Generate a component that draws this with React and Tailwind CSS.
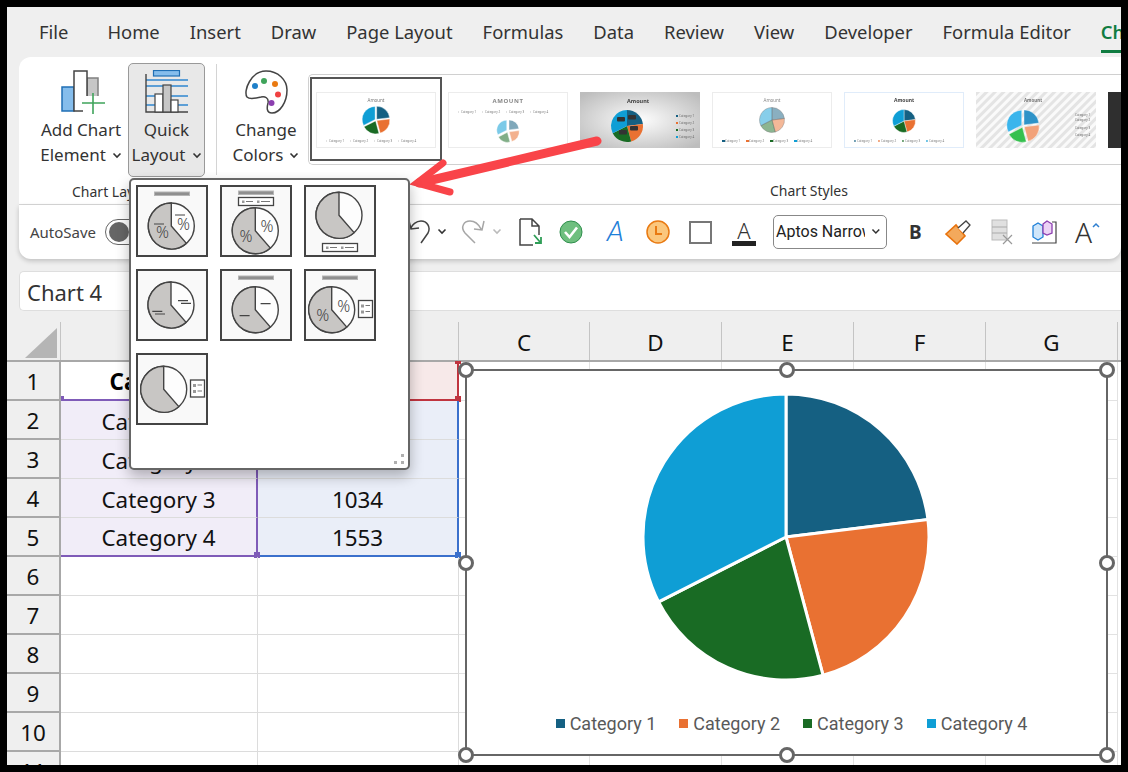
import React from 'react';

const UI = "font-['Noto_Sans',sans-serif]";
const tabs = ['Home', 'Insert', 'Draw', 'Page Layout', 'Formulas', 'Data', 'Review', 'View', 'Developer', 'Formula Editor'];
const PIE = ['#156082', '#e97132', '#196b24', '#0f9ed5'];
const ENDS = [0, 83, 165, 243, 360];

function pt(cx, cy, r, deg) {
    const a = (deg - 90) * Math.PI / 180;
    return [cx + r * Math.cos(a), cy + r * Math.sin(a)];
}

function slicePath(cx, cy, r, from, to) {
    const [x1, y1] = pt(cx, cy, r, from);
    const [x2, y2] = pt(cx, cy, r, to);
    return `M${cx} ${cy}L${x1} ${y1}A${r} ${r} 0 ${to - from > 180 ? 1 : 0} 1 ${x2} ${y2}Z`;
}

function Chevron({ color = '#333' }) {
    return (
        <svg width="10" height="7" viewBox="0 0 10 7" className="inline-block ml-[6px] mb-[2px]">
            <path d="M1.5 1.5L5 5L8.5 1.5" fill="none" stroke={color} strokeWidth="1.6" />
        </svg>
    );
}

function AddChartIcon() {
    return (
        <svg width="44" height="44" viewBox="0 0 44 44" className="ml-[4px]">
            <rect x="1" y="17" width="12" height="24" fill="#85bdec" stroke="#1f6fb5" strokeWidth="1.5" />
            <rect x="26" y="8" width="11" height="33" fill="#c6c6c6" stroke="#808080" strokeWidth="1.5" />
            <rect x="13" y="1" width="13" height="40" fill="#fff" stroke="#444" strokeWidth="1.5" />
            <rect x="22" y="26" width="22" height="18" fill="#fff" />
            <path d="M32 23V45M21 33H44" stroke="#3fa45b" strokeWidth="1.6" />
        </svg>
    );
}

function QuickLayoutIcon() {
    return (
        <svg width="44" height="44" viewBox="0 0 44 44">
            <rect x="8.5" y="0.5" width="26" height="5.5" fill="#85bdec" stroke="#1f6fb5" strokeWidth="1.2" />
            <path d="M1 10H43M1 16H43M1 26H43M1 35H43" stroke="#2f86cf" strokeWidth="1.3" />
            <path d="M1 4V42H43" fill="none" stroke="#444" strokeWidth="1.4" />
            <rect x="10" y="24" width="8" height="18" fill="#fff" stroke="#444" strokeWidth="1.2" />
            <rect x="18" y="15" width="8" height="27" fill="#c6c6c6" stroke="#444" strokeWidth="1.2" />
            <rect x="26" y="30" width="7" height="12" fill="#fff" stroke="#444" strokeWidth="1.2" />
        </svg>
    );
}

function PaletteIcon() {
    return (
        <svg width="44" height="44" viewBox="0 0 44 44">
            <path d="M22 1C34 1 43 10 43 20C43 32 36 43 28 43C22 43 23 37 24 33C25 28 21 26 17 27C12 28 6 30 3 27C-1 21 7 1 22 1Z" fill="#fff" stroke="#444" strokeWidth="1.5" />
            <circle cx="11" cy="16" r="3" fill="#1f80c9" />
            <circle cx="20" cy="11" r="3" fill="#3fa45b" />
            <circle cx="31" cy="14" r="3" fill="#e97a12" />
            <circle cx="34" cy="24.500" r="3" fill="#f04242" />
            <circle cx="27.500" cy="33" r="3" fill="#8c3fb0" />
        </svg>
    );
}

function BigButton({ icon, top, bottom, className, iconClass = 'mt-[13px]' }) {
    return (
        <div className={`flex flex-col items-center ${className}`}>
            <div className={`h-[44px] ${iconClass}`}>{icon}</div>
            <div className="mt-[3px] text-[17px] leading-[25px] text-[#333] text-center whitespace-nowrap">
                <div>{top}</div>
                <div>{bottom}<Chevron /></div>
            </div>
        </div>
    );
}

function ThumbPie({ cx, cy, r, gap = 1, colors = PIE, opacity = 1, stroke = '#fff' }) {
    return ENDS.slice(0, 4).map((from, i) => {
        const mid = (from + ENDS[i + 1]) / 2;
        const [ox, oy] = pt(0, 0, gap, mid);
        return (
            <path key={i} d={slicePath(cx + ox, cy + oy, r, from, ENDS[i + 1])} fill={colors[i]} fillOpacity={opacity} stroke={stroke} strokeWidth="0.4" />
        );
    });
}

function LegendRow({ y, size = 3, fill = '#777', swatch = 1.2, colors }) {
    return [13, 37, 61, 85].map((x, i) => (
        <g key={x}>
            <rect x={x - 3} y={y - swatch / 2} width={swatch * 1.6} height={swatch} fill={colors ? colors[i] : '#999'} />
            <text x={x} y={y + 1} fontSize={size} fill={fill}>Category {i + 1}</text>
        </g>
    ));
}

function LegendCol({ x, ys, colors, fill = '#666' }) {
    return ys.map((y, i) => (
        <g key={y}>
            {colors && <rect x={x - 3} y={y - 1} width="2" height="2" fill={colors[i]} />}
            <text x={x} y={y + 1} fontSize="3" fill={fill}>Category {i + 1}</text>
        </g>
    ));
}

function Thumb({ children, border = '#ececec' }) {
    return (
        <svg width="120" height="56" viewBox="0 0 120 56" className="shrink-0 blur-[0.3px]">
            <rect x="0.5" y="0.5" width="119" height="55" fill="#fff" stroke={border} />
            {children}
        </svg>
    );
}

function Gallery() {
    const bright = ['#2f93c8', '#f2a27a', '#35c04e', '#3ab5ec'];
    return (
        <div className="mt-[17px] -ml-[7px] h-[91px] border border-r-0 border-[#d0d0d0] rounded-l-[5px] relative flex items-center pl-[7px] gap-[12px] overflow-hidden">
            <div className="absolute left-[1px] top-[2px] w-[132px] h-[84px] border-2 border-[#555]" />
            <Thumb>
                <text x="60" y="10" textAnchor="middle" fontSize="4.500" fill="#777">Amount</text>
                <ThumbPie cx={60} cy={28} r={13} />
                <LegendRow y={49} swatch={0.6} />
            </Thumb>
            <Thumb>
                <text x="60" y="11" textAnchor="middle" fontSize="6" fontWeight="700" letterSpacing="0.6" fill="#888">AMOUNT</text>
                <LegendRow y={20} swatch={0.6} />
                <ThumbPie cx={60} cy={39} r={10} gap={1.5} opacity={0.55} />
            </Thumb>
            <Thumb>
                <defs>
                    <radialGradient id="thumbGrey" cx="50%" cy="50%" r="65%">
                        <stop offset="0%" stopColor="#fdfdfd" />
                        <stop offset="100%" stopColor="#bdbdbd" />
                    </radialGradient>
                </defs>
                <rect width="120" height="56" fill="url(#thumbGrey)" />
                <text x="47" y="11" fontSize="5.500" fontWeight="700" fill="#444">Amount</text>
                <ThumbPie cx={47} cy={34} r={16} gap={0} stroke="none" />
                <rect x="37" y="25" width="8" height="4.500" rx="1" fill="#333" />
                <rect x="48" y="23" width="8" height="4.500" rx="1" fill="#333" />
                <rect x="50" y="34" width="8" height="4.500" rx="1" fill="#333" />
                <rect x="39" y="38" width="8" height="4.500" rx="1" fill="#333" />
                <LegendCol x={99} ys={[24, 31, 38, 45]} colors={PIE} />
            </Thumb>
            <Thumb>
                <text x="60" y="10" textAnchor="middle" fontSize="4.500" fill="#888">Amount</text>
                <ThumbPie cx={60} cy={28} r={12.500} gap={0} opacity={0.5} stroke="#777" />
                <LegendRow y={49} swatch={2} colors={PIE} />
            </Thumb>
            <Thumb border="#e0ecfa">
                <text x="60" y="10" textAnchor="middle" fontSize="5" fontWeight="700" fill="#444">Amount</text>
                <ThumbPie cx={60} cy={29} r={11.500} gap={0} />
                <LegendRow y={49} colors={PIE} />
            </Thumb>
            <Thumb>
                <defs>
                    <pattern id="thumbStripes" width="6" height="6" patternUnits="userSpaceOnUse" patternTransform="rotate(45)">
                        <rect width="6" height="6" fill="#fafafa" />
                        <rect width="3" height="6" fill="#e4e4e4" />
                    </pattern>
                </defs>
                <rect width="120" height="56" fill="url(#thumbStripes)" />
                <text x="48" y="10" fontSize="4.500" fontWeight="700" fill="#777">Amount</text>
                <ThumbPie cx={47} cy={34} r={15} gap={1.500} colors={bright} />
                <LegendCol x={99} ys={[23, 28, 36, 43]} />
            </Thumb>
            <div className="w-[120px] h-[56px] shrink-0 bg-[#2f2f2f]" />
        </div>
    );
}

function IconUndo() {
    return (
        <svg width="22" height="26" viewBox="0 0 22 26" className="shrink-0">
            <path d="M12 24L19 14C22 8 18 2 12 2C7 2 3 6 2 9M0 2L2 10L10 9" fill="none" stroke="#444" strokeWidth="1.5" />
        </svg>
    );
}

function IconRedo() {
    return (
        <svg width="26" height="24" viewBox="0 0 26 24" className="shrink-0">
            <path d="M15 23L5 13C0 7 4 1 10 1C15 1 19 5 21 9M24 1L22 10L14 9" fill="none" stroke="#a6a6a6" strokeWidth="1.5" />
        </svg>
    );
}

function QatBar() {
    return (
        <div className="h-[54px] ml-[12px] bg-white rounded-b-[12px] shadow-[0_2px_5px_rgba(0,0,0,0.2)] flex items-center relative">
            <span className="ml-[11px] text-[15px] text-[#444] w-[75px] shrink-0">AutoSave</span>
            <div className="w-[50px] h-[26px] rounded-full border border-[#666] flex items-center pl-[3px] shrink-0">
                <div className="w-[20px] h-[20px] rounded-full bg-[#666]" />
            </div>
            <div className="ml-[254px]"><IconUndo /></div>
            <Chevron />
            <div className="ml-[13px]"><IconRedo /></div>
            <Chevron color="#bbb" />
            <svg width="24" height="28" viewBox="0 0 24 28" className="ml-[17px] shrink-0">
                <path d="M1 1H13L20 8V17M13 1V8H20M14 27H1V1" fill="none" stroke="#444" strokeWidth="1.5" />
                <path d="M15 17L21 24M22 19V25H16" fill="none" stroke="#2f9e57" strokeWidth="1.8" />
            </svg>
            <svg width="24" height="24" viewBox="0 0 24 24" className="ml-[16px] shrink-0">
                <circle cx="12" cy="12" r="11" fill="#6fbf7f" stroke="#2f8f4d" />
                <path d="M6 12L10.500 17L18 7.500" fill="none" stroke="#fff" strokeWidth="2.6" />
            </svg>
            <span className="ml-[24px] w-[20px] text-[28px] leading-none italic font-light text-[#1f80d8] font-['Roboto',sans-serif] shrink-0">A</span>
            <svg width="24" height="24" viewBox="0 0 24 24" className="ml-[19px] shrink-0">
                <circle cx="12" cy="12" r="11" fill="#fbc77d" stroke="#e97a12" strokeWidth="1.5" />
                <path d="M10 6V14H16" fill="none" stroke="#e97a12" strokeWidth="2" />
            </svg>
            <div className="ml-[19px] w-[23px] h-[23px] border-2 border-[#777] shrink-0" />
            <div className="ml-[20px] w-[24px] flex flex-col items-center shrink-0">
                <span className="text-[22px] leading-[22px] font-light text-[#333]">A</span>
                <div className="w-[24px] h-[5px] bg-[#222]" />
            </div>
            <div className="ml-[17px] w-[114px] h-[34px] border border-[#888] rounded-[5px] flex items-center justify-between pl-[2px] pr-[5px] shrink-0 overflow-hidden">
                <span className="text-[16px] text-[#222] font-['Roboto',sans-serif] w-[92px] overflow-hidden whitespace-nowrap">Aptos Narrow</span>
                <Chevron />
            </div>
            <span className="ml-[22px] w-[12px] text-[19px] font-bold text-[#333] shrink-0">B</span>
            <svg width="26" height="26" viewBox="0 0 26 26" className="ml-[24px] shrink-0">
                <path d="M1 15L11 6L20 17L12 25Z" fill="#f3a95c" stroke="#e8720c" strokeWidth="1.6" />
                <path d="M13 9L21 2L25 6L18 14" fill="#fff" stroke="#444" strokeWidth="1.3" />
            </svg>
            <svg width="22" height="26" viewBox="0 0 22 26" className="ml-[20px] shrink-0">
                <rect x="1" y="1" width="15" height="20" fill="#e0e0e0" stroke="#bbb" />
                <path d="M1 8H16M1 14H16" stroke="#aaa" />
                <path d="M12 16L21 25M21 16L12 25" stroke="#999" strokeWidth="1.2" />
            </svg>
            <svg width="26" height="26" viewBox="0 0 26 26" className="ml-[18px] shrink-0">
                <path d="M1 24H25V3H21" fill="none" stroke="#444" strokeWidth="1.2" />
                <path d="M2 7L7 4L12 7V18L7 21L2 18Z" fill="#cfe6fa" stroke="#1f80d8" strokeWidth="1.3" />
                <path d="M12 5L16 2L21 5V14L16 16L12 14Z" fill="#ecd2f5" stroke="#8c3fb0" strokeWidth="1.3" />
            </svg>
            <span className="ml-[18px] text-[28px] leading-none font-light text-[#333] shrink-0">A</span>
            <svg width="8" height="6" viewBox="0 0 8 6" className="mb-[14px] shrink-0">
                <path d="M1 5L4 2L7 5" fill="none" stroke="#2f7fd0" strokeWidth="1.5" />
            </svg>
        </div>
    );
}

const cellText = "text-[22.4px] text-[#111] pt-[3px]";

function Row({ num, a, b, aClass = '', bClass = '', children }) {
    return (
        <div className="flex h-[39px]">
            <div className={`w-[54px] shrink-0 bg-[#efefef] border-r-2 border-b-2 border-[#a8a8a8] flex items-center justify-center ${cellText}`}>{num}</div>
            <div className={`w-[197px] shrink-0 border-r border-b border-[#dcdcdc] flex items-center justify-center relative ${cellText} ${aClass}`}>{a}</div>
            <div className={`w-[201px] shrink-0 border-r border-b border-[#dcdcdc] flex items-center justify-center relative ${cellText} ${bClass}`}>{b}{children}</div>
            {[0, 1, 2, 3, 4].map((i) => <div key={i} className={`${i === 0 ? 'w-[131px]' : 'w-[132px]'} shrink-0 border-r border-b border-[#e2e2e2]`} />)}
        </div>
    );
}

function Sheet() {
    const empty = [6, 7, 8, 9, 10, 11];
    const aFill = 'bg-[#f1edf8] !border-r-2 !border-r-[#7f5bb8]';
    const bFill = 'bg-[#eaeef8] !border-r-2 !border-r-[#3b70cc]';
    return (
        <div className="mt-[11px] bg-white">
            <div className="flex h-[40px] bg-[#efefef] border-b-2 border-[#a8a8a8]">
                <div className="w-[54px] shrink-0 relative border-r border-[#c4c4c4]">
                    <div className="absolute left-[18px] top-[6px] w-[32px] h-[30px] bg-[#b5b5b5] [clip-path:polygon(100%_0,100%_100%,0_100%)]" />
                </div>
                {[['A', 'w-[197px]'], ['B', 'w-[201px]'], ['C', 'w-[131px]'], ['D', 'w-[132px]'], ['E', 'w-[132px]'], ['F', 'w-[132px]'], ['G', 'w-[132px]']].map(([c, w]) => (
                    <div key={c} className={`${w} shrink-0 border-r border-[#c4c4c4] flex items-center justify-center ${cellText}`}>{c}</div>
                ))}
            </div>
            <Row
                num={1}
                a={<>Category<div className="absolute left-0 bottom-[-3px] w-[3px] h-[6px] bg-[#7f5bb8]" /></>}
                b="Value"
                aClass="font-bold !text-black pl-[3px] !border-b-2 !border-b-[#7f5bb8]"
                bClass="bg-[#f7e9e9] !border-b-2 !border-b-[#c0343f] !border-r-2 !border-r-[#c0343f]"
            >
                <div className="absolute right-[-4px] top-[-1px] w-[6px] h-[3px] bg-[#c0343f]" />
                <div className="absolute right-[-4px] bottom-[-3px] w-[6px] h-[6px] bg-[#c0343f]" />
            </Row>
            <Row num={2} a="Category 1" b="1098" aClass={aFill} bClass={bFill} />
            <Row num={3} a="Category 2" b="1078" aClass={aFill} bClass={bFill} />
            <Row num={4} a="Category 3" b="1034" aClass={aFill} bClass={bFill} />
            <Row num={5} a="Category 4" b="1553" aClass={`${aFill} !border-b-2 !border-b-[#7f5bb8]`} bClass={`${bFill} !border-b-2 !border-b-[#3b70cc]`}>
                <div className="absolute left-[-4px] bottom-[-3px] w-[6px] h-[6px] bg-[#7f5bb8]" />
                <div className="absolute right-[-4px] bottom-[-3px] w-[6px] h-[6px] bg-[#3b70cc]" />
            </Row>
            {empty.map((n) => <Row key={n} num={n} />)}
        </div>
    );
}

function Handle({ className }) {
    return <div className={`absolute w-[16px] h-[16px] rounded-full bg-white border-[3px] border-[#666] ${className}`} />;
}

function ChartBox() {
    const legend = ['Category 1', 'Category 2', 'Category 3', 'Category 4'];
    return (
        <div className="absolute left-[458px] top-[362px] w-[643px] h-[387px] bg-white border-2 border-[#666] flex flex-col items-center">
            <svg width="292" height="292" viewBox="0 0 292 292" className="mt-[20px] mr-[2px] shrink-0">
                {PIE.map((c, i) => (
                    <path key={c} d={slicePath(146, 146, 143, ENDS[i], ENDS[i + 1])} fill={c} stroke="#fff" strokeWidth="3" />
                ))}
            </svg>
            <div className="mt-[28px] ml-[10px] h-[24px] flex items-center gap-[23px] font-['Roboto',sans-serif] text-[18px] text-[#595959]">
                {legend.map((l, i) => (
                    <div key={l} className="flex items-center gap-[5px]">
                        <svg width="9" height="9" viewBox="0 0 9 9"><rect width="9" height="9" fill={PIE[i]} /></svg>
                        <span>{l}</span>
                    </div>
                ))}
            </div>
            <Handle className="left-[-9px] top-[-9px]" />
            <Handle className="left-[312px] top-[-9px]" />
            <Handle className="right-[-9px] top-[-9px]" />
            <Handle className="left-[-9px] top-[184px]" />
            <Handle className="right-[-9px] top-[184px]" />
            <Handle className="left-[-9px] bottom-[-9px]" />
            <Handle className="left-[312px] bottom-[-9px]" />
            <Handle className="right-[-9px] bottom-[-9px]" />
        </div>
    );
}

function MiniPie({ cx, cy, children }) {
    return (
        <g>
            <circle cx={cx} cy={cy} r="23" fill="#fdfdfd" stroke="#444" strokeWidth="1.4" />
            <path d={slicePath(cx, cy, 23, 139, 360)} fill="#c8c6c4" stroke="#444" strokeWidth="1.4" />
            {children}
        </g>
    );
}

function Pct({ x, y }) {
    return <text x={x} y={y} textAnchor="middle" fontSize="16" fontWeight="300" fill="#444" fontFamily="Noto Sans">%</text>;
}

function Title({ y = 7 }) {
    return <rect x="18.500" y={y} width="35" height="3.500" fill="#8f8f8f" stroke="#b5b5b5" />;
}

function HLegend({ y }) {
    return (
        <g>
            <rect x="18.500" y={y} width="35" height="8" fill="#fff" stroke="#444" strokeWidth="1.3" />
            <rect x="22" y={y + 3} width="2.500" height="2.500" fill="#999" />
            <path d={`M26 ${y + 4}H33M41 ${y + 4}H50`} stroke="#777" strokeWidth="1.200" />
            <rect x="37" y={y + 3} width="2.500" height="2.500" fill="#999" />
        </g>
    );
}

function VLegend({ y }) {
    return (
        <g>
            <rect x="54.500" y={y} width="14" height="17" fill="#fff" stroke="#444" strokeWidth="1.3" />
            <rect x="57" y={y + 4} width="3" height="3" fill="#999" />
            <rect x="57" y={y + 10} width="3" height="3" fill="#999" />
            <path d={`M61.500 ${y + 5}H66M61.500 ${y + 11}H66`} stroke="#777" strokeWidth="1.100" />
        </g>
    );
}

const layouts = [
    <g><Title /><MiniPie cx={35.300} cy={41}><Pct x={47.500} y={45} /><Pct x={26.500} y={53} /><path d="M39 30H49M18 39H28" stroke="#444" strokeWidth="1.200" /></MiniPie></g>,
    <g><Title y={6} /><HLegend y={12.500} /><MiniPie cx={35.300} cy={45.700}><Pct x={47} y={47} /><Pct x={26} y={56.500} /></MiniPie></g>,
    <g><MiniPie cx={35} cy={30.300} /><HLegend y={58.500} /></g>,
    <g><MiniPie cx={35} cy={36}><path d="M42 31.600H52M45 34.300H55M16.300 42.300H26.300M19 45H29" stroke="#444" strokeWidth="1.200" /></MiniPie></g>,
    <g><Title /><MiniPie cx={35.300} cy={40.700}><path d="M40.600 34.700H50.600M19.600 46.700H29.600" stroke="#444" strokeWidth="1.300" /></MiniPie></g>,
    <g><Title /><MiniPie cx={27.700} cy={40.700}><Pct x={39.700} y={42.500} /><Pct x={18.700} y={51.500} /></MiniPie><VLegend y={31.500} /></g>,
    <g><MiniPie cx={27.700} cy={36.300} /><VLegend y={27} /></g>,
];

function QuickLayoutMenu() {
    return (
        <div className="absolute left-[122px] top-[171px] w-[281px] h-[292px] bg-white border-2 border-[#666] rounded-[5px] shadow-[0_6px_14px_rgba(0,0,0,0.28)] pl-[5px] pt-[5px]">
            <div className="grid grid-cols-[72px_72px_72px] gap-[12px]">
                {layouts.map((art, i) => (
                    <svg key={i} width="72" height="72" viewBox="0 0 72 72">
                        <rect x="1" y="1" width="70" height="70" fill="#f9f9f9" stroke="#444" strokeWidth="2" />
                        {art}
                    </svg>
                ))}
            </div>
            <svg width="11" height="11" viewBox="0 0 11 11" className="absolute right-[3px] bottom-[3px]">
                <path d="M7 0h3v3H7zM0 7h3v3H0zM7 7h3v3H7z" fill="#b0b0b0" />
            </svg>
        </div>
    );
}

function RedArrow() {
    return (
        <svg width="210" height="66" viewBox="0 0 210 66" className="absolute left-[400px] top-[128px] pointer-events-none">
            <path d="M190 6L12 48" stroke="#f94449" strokeWidth="9" strokeLinecap="round" fill="none" />
            <path d="M36 28L10 48L43 57" stroke="#f94449" strokeWidth="7" strokeLinecap="round" fill="none" />
        </svg>
    );
}

export default function App() {
    return (
        <div className={`w-[1128px] h-[772px] bg-black p-[7px] ${UI}`}>
            <div className="relative w-[1114px] h-[758px] bg-[#efefef] overflow-hidden">
                <div className="h-[50px] flex items-center gap-[30px] pl-[32px] text-[18.400px] text-[#333] whitespace-nowrap">
                    <span className="mr-[9px]">File</span>
                    {tabs.map((t) => <span key={t}>{t}</span>)}
                    <span className="relative text-[#107c41] font-semibold leading-[50px]">
                        Chart Design
                        <span className="absolute left-0 right-0 bottom-[4px] h-[3px] bg-[#107c41]" />
                    </span>
                </div>

                <div className="h-[148px] ml-[12px] bg-white rounded-tl-[12px] border-b border-[#d8d8d8] flex">
                    <div className="w-[197px] shrink-0 relative">
                        <div className="flex">
                            <BigButton icon={<AddChartIcon />} top="Add Chart" bottom="Element" className="w-[109px] pl-[15px]" />
                            <BigButton icon={<QuickLayoutIcon />} top="Quick" bottom="Layout" iconClass="mt-[6px]" className="w-[77px] h-[114px] mt-[6px] bg-[#e8e8e8] border border-[#999] rounded-[5px]" />
                        </div>
                        <div className="absolute left-[53px] top-[124px] text-[14px] text-[#333] whitespace-nowrap">Chart Layouts</div>
                    </div>
                    <div className="w-px h-[111px] mt-[7px] bg-[#d4d4d4] shrink-0" />
                    <BigButton icon={<PaletteIcon />} top="Change" bottom="Colors" className="w-[98px] shrink-0" />
                    <div className="flex-1 min-w-0 flex flex-col">
                        <Gallery />
                        <div className="text-[14px] text-[#333] mt-[15px] pl-[455px]">Chart Styles</div>
                    </div>
                </div>

                <QatBar />

                <div className="h-[40px] mt-[12px] ml-[12px] bg-white border border-[#dedede] border-r-0 rounded-l-[5px] flex items-center pl-[7px] pt-[3px] text-[22px] text-[#333]">
                    Chart 4
                </div>

                <Sheet />
                <ChartBox />
                <RedArrow />
                <QuickLayoutMenu />
            </div>
        </div>
    );
}
